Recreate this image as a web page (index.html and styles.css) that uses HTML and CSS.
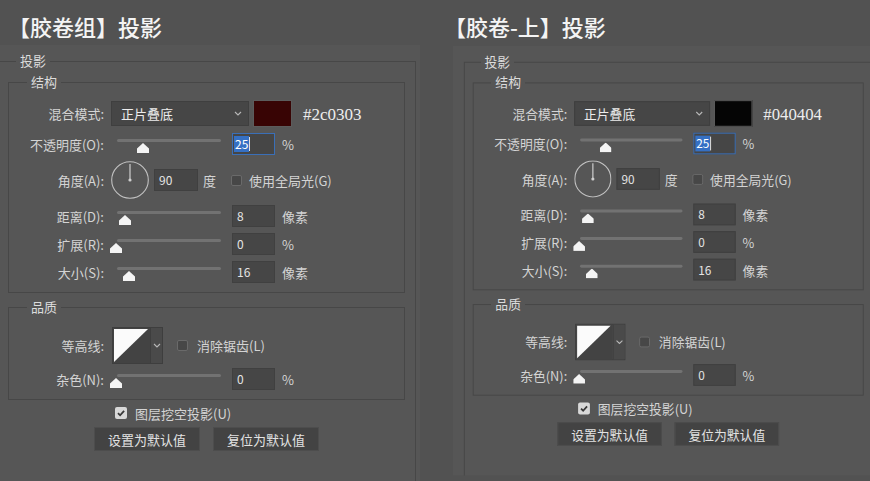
FILE: index.html
```html
<!DOCTYPE html>
<html lang="zh-CN">
<head>
  <meta charset="UTF-8">
  <meta name="viewport" content="width=device-width, initial-scale=1.0">
  <title>投影对比</title>
  <link rel="stylesheet" href="styles.css">
</head>
<body>
  <!-- Left: 胶卷组 -->
  <div class="column column-left">
    <h1 class="title">【胶卷组】投影</h1>
    <div class="sheet">
      <fieldset class="group group-outer">
        <legend>投影</legend>

        <fieldset class="group">
          <legend>结构</legend>
          <div class="rows">
            <div class="row row-blend">
              <span class="label">混合模式:</span>
              <div class="select">
                <span>正片叠底</span>
                <svg width="8" height="5" viewBox="0 0 8 5"><path d="M1 1l3 3 3-3" fill="none" stroke="#b8b8b8" stroke-width="1.1"/></svg>
              </div>
              <div class="swatch swatch-red"></div>
              <span class="hex">#2c0303</span>
            </div>
            <div class="row">
              <span class="label">不透明度(O):</span>
              <div class="slider"><div class="track"></div><div class="thumb" style="--v: 26px"></div></div>
              <div class="field field-focus"><span>25</span><i class="caret"></i></div>
              <span class="unit">%</span>
            </div>
            <div class="row row-angle">
              <span class="label">角度(A):</span>
              <svg class="dial" viewBox="0 0 38 38"><circle cx="19" cy="19" r="18.3" fill="none" stroke="#c2c2c2" stroke-width="1.1"/><line x1="19" y1="19" x2="19" y2="3" stroke="#cfcfcf" stroke-width="1.2"/><circle cx="19" cy="19" r="1.6" fill="#cfcfcf"/></svg>
              <div class="field">90</div>
              <span class="unit">度</span>
              <span class="check"></span>
              <span class="check-text">使用全局光(G)</span>
            </div>
            <div class="row">
              <span class="label">距离(D):</span>
              <div class="slider"><div class="track"></div><div class="thumb" style="--v: 8px"></div></div>
              <div class="field">8</div>
              <span class="unit">像素</span>
            </div>
            <div class="row">
              <span class="label">扩展(R):</span>
              <div class="slider"><div class="track"></div><div class="thumb" style="--v: -1px"></div></div>
              <div class="field">0</div>
              <span class="unit">%</span>
            </div>
            <div class="row">
              <span class="label">大小(S):</span>
              <div class="slider"><div class="track"></div><div class="thumb" style="--v: 12px"></div></div>
              <div class="field">16</div>
              <span class="unit">像素</span>
            </div>
          </div>
        </fieldset>

        <fieldset class="group">
          <legend>品质</legend>
          <div class="rows rows-quality">
            <div class="row row-contour">
              <span class="label">等高线:</span>
              <div class="contour">
                <svg class="curve" viewBox="0 0 37 35"><rect width="37" height="35" fill="#434343"/><polygon points="1,1 35,1 1,34" fill="#fbfbfb"/></svg>
                <div class="drop"><svg width="8" height="5" viewBox="0 0 8 5"><path d="M1 1l3 3 3-3" fill="none" stroke="#b8b8b8" stroke-width="1.1"/></svg></div>
              </div>
              <span class="check"></span>
              <span class="check-text">消除锯齿(L)</span>
            </div>
            <div class="row">
              <span class="label">杂色(N):</span>
              <div class="slider"><div class="track"></div><div class="thumb" style="--v: -1px"></div></div>
              <div class="field">0</div>
              <span class="unit">%</span>
            </div>
          </div>
        </fieldset>

        <div class="knockout">
          <span class="check-on"><svg viewBox="0 0 12 12"><path d="M3 6.2l2.1 2.1 4-4.5" fill="none" stroke="#383838" stroke-width="1.8"/></svg></span>
          <span>图层挖空投影(U)</span>
        </div>
        <div class="buttons">
          <button class="button">设置为默认值</button>
          <button class="button">复位为默认值</button>
        </div>
      </fieldset>
    </div>
  </div>

  <!-- Right: 胶卷-上 -->
  <div class="column column-right">
    <h1 class="title">【胶卷-上】投影</h1>
    <div class="sheet">
      <fieldset class="group group-outer">
        <legend>投影</legend>

        <fieldset class="group">
          <legend>结构</legend>
          <div class="rows">
            <div class="row row-blend">
              <span class="label">混合模式:</span>
              <div class="select">
                <span>正片叠底</span>
                <svg width="8" height="5" viewBox="0 0 8 5"><path d="M1 1l3 3 3-3" fill="none" stroke="#b8b8b8" stroke-width="1.1"/></svg>
              </div>
              <div class="swatch swatch-black"></div>
              <span class="hex">#040404</span>
            </div>
            <div class="row">
              <span class="label">不透明度(O):</span>
              <div class="slider"><div class="track"></div><div class="thumb" style="--v: 26px"></div></div>
              <div class="field field-focus"><span>25</span><i class="caret"></i></div>
              <span class="unit">%</span>
            </div>
            <div class="row row-angle">
              <span class="label">角度(A):</span>
              <svg class="dial" viewBox="0 0 38 38"><circle cx="19" cy="19" r="18.3" fill="none" stroke="#c2c2c2" stroke-width="1.1"/><line x1="19" y1="19" x2="19" y2="3" stroke="#cfcfcf" stroke-width="1.2"/><circle cx="19" cy="19" r="1.6" fill="#cfcfcf"/></svg>
              <div class="field">90</div>
              <span class="unit">度</span>
              <span class="check"></span>
              <span class="check-text">使用全局光(G)</span>
            </div>
            <div class="row">
              <span class="label">距离(D):</span>
              <div class="slider"><div class="track"></div><div class="thumb" style="--v: 8px"></div></div>
              <div class="field">8</div>
              <span class="unit">像素</span>
            </div>
            <div class="row">
              <span class="label">扩展(R):</span>
              <div class="slider"><div class="track"></div><div class="thumb" style="--v: -1px"></div></div>
              <div class="field">0</div>
              <span class="unit">%</span>
            </div>
            <div class="row">
              <span class="label">大小(S):</span>
              <div class="slider"><div class="track"></div><div class="thumb" style="--v: 12px"></div></div>
              <div class="field">16</div>
              <span class="unit">像素</span>
            </div>
          </div>
        </fieldset>

        <fieldset class="group">
          <legend>品质</legend>
          <div class="rows rows-quality">
            <div class="row row-contour">
              <span class="label">等高线:</span>
              <div class="contour">
                <svg class="curve" viewBox="0 0 37 35"><rect width="37" height="35" fill="#434343"/><polygon points="1,1 35,1 1,34" fill="#fbfbfb"/></svg>
                <div class="drop"><svg width="8" height="5" viewBox="0 0 8 5"><path d="M1 1l3 3 3-3" fill="none" stroke="#b8b8b8" stroke-width="1.1"/></svg></div>
              </div>
              <span class="check"></span>
              <span class="check-text">消除锯齿(L)</span>
            </div>
            <div class="row">
              <span class="label">杂色(N):</span>
              <div class="slider"><div class="track"></div><div class="thumb" style="--v: -1px"></div></div>
              <div class="field">0</div>
              <span class="unit">%</span>
            </div>
          </div>
        </fieldset>

        <div class="knockout">
          <span class="check-on"><svg viewBox="0 0 12 12"><path d="M3 6.2l2.1 2.1 4-4.5" fill="none" stroke="#383838" stroke-width="1.8"/></svg></span>
          <span>图层挖空投影(U)</span>
        </div>
        <div class="buttons">
          <button class="button">设置为默认值</button>
          <button class="button">复位为默认值</button>
        </div>
      </fieldset>
    </div>
  </div>
</body>
</html>
```

FILE: styles.css
```css
* {
  box-sizing: border-box;
}
body {
  margin: 0;
  width: 870px;
  height: 481px;
  overflow: hidden;
  display: flex;
  background: #525252;
  font-family: "Noto Sans CJK SC", "Noto Sans", sans-serif;
  font-size: 13px;
  color: #d4d4d4;
}
.column {
  width: 435px;
  height: 481px;
  flex-shrink: 0;
  overflow: hidden;
}
.title {
  margin: 0;
  height: 42px;
  padding: 10px 0 0 8px;
  font-size: 22px;
  line-height: 32px;
  font-weight: 500;
  color: #f4f4f4;
  white-space: nowrap;
}
.column-right .title {
  padding-left: 9px;
}
.sheet {
  width: 432px;
  height: 436px;
  margin: 3px 0 0 -12px;
  padding: 0 4px 0 11px;
  background: #565656;
  overflow: hidden;
}
.column-right .sheet {
  margin: 4px 0 0 18px;
  transform: scale(0.985);
  transform-origin: 0 0;
}

/* Group boxes */
.group {
  margin: 0;
  min-width: 0;
  padding: 9px 0;
  border: 1px solid #474747;
}
.group legend {
  margin-left: 18px;
  padding: 0 4px;
  line-height: 18px;
  color: #dcdcdc;
}
.group-outer {
  height: 440px;
  margin-top: 7px;
  padding: 3px 10px 0 8px;
}
.group-outer > legend {
  margin-left: 8px;
}
.group + .group {
  margin-top: 5px;
  padding-top: 11px;
}
.rows {
  display: flex;
  flex-direction: column;
  gap: 6px;
}
.rows-quality {
  gap: 4px;
}
.row {
  display: flex;
  align-items: center;
  height: 22px;
  white-space: nowrap;
}
.row-blend {
  height: 27px;
}
.row-angle {
  height: 38px;
}
.row-contour {
  height: 37px;
}
.label {
  width: 95px;
  flex-shrink: 0;
  text-align: right;
}

/* Blend mode */
.select {
  display: flex;
  align-items: center;
  justify-content: space-between;
  width: 138px;
  height: 25px;
  margin-left: 7px;
  padding: 0 6px 0 9px;
  background: #464646;
  border: 1px solid #3f3f3f;
  color: #ededed;
}
.swatch {
  width: 39px;
  height: 27px;
  margin-left: 4px;
  border: 1px solid #5c5c5c;
}
.swatch-red {
  background: #380404;
}
.swatch-black {
  background: #050505;
}
.hex {
  margin: 2px 0 0 11px;
  font-family: "Liberation Serif", serif;
  font-size: 17px;
  color: #ededed;
}

/* Sliders */
.slider {
  position: relative;
  width: 104px;
  height: 22px;
  margin-left: 13px;
}
.track {
  height: 3px;
  margin-top: 6px;
  background: #727272;
  border-radius: 2px;
}
.thumb {
  position: absolute;
  top: 10px;
  left: calc(var(--v) - 6px);
  width: 12px;
  height: 10px;
  background: #f4f4f4;
  clip-path: polygon(50% 0, 100% 55%, 100% 100%, 0 100%, 0 55%);
}
.field {
  width: 43px;
  height: 22px;
  margin-left: 11px;
  padding-left: 4px;
  background: #464646;
  border: 1px solid #404040;
  color: #e4e4e4;
  font-size: 12px;
  line-height: 20px;
}
.field-focus {
  display: flex;
  align-items: center;
  border-color: #3a6fb8;
  padding-left: 1px;
}
.field-focus span {
  padding: 0 1px;
  background: #3570c4;
  color: #fff;
  line-height: 16px;
}
.caret {
  width: 1px;
  height: 14px;
  background: #e0e0e0;
}
.unit {
  margin-left: 7px;
}

/* Angle */
.dial {
  width: 38px;
  height: 38px;
  margin-left: 7px;
  flex-shrink: 0;
}
.row-angle .field {
  width: 44px;
  margin-left: 5px;
}
.row-angle .unit {
  margin-left: 5px;
}
.check {
  width: 11px;
  height: 11px;
  flex-shrink: 0;
  background: #474747;
  border: 1px solid #6a6a6a;
  border-radius: 2px;
}
.row-angle .check {
  margin-left: 15px;
}
.check-text {
  margin-left: 7px;
}

/* Contour */
.contour {
  display: flex;
  width: 51px;
  height: 37px;
  margin-left: 8px;
  border: 1px solid #3e3e3e;
}
.curve {
  width: 37px;
  height: 35px;
}
.drop {
  flex: 1;
  display: flex;
  align-items: center;
  justify-content: center;
  background: #4a4a4a;
  border-left: 1px solid #3e3e3e;
}
.row-contour .check {
  margin-left: 14px;
}
.row-contour .check-text {
  margin-left: 9px;
}

/* Bottom */
.knockout {
  display: flex;
  align-items: center;
  height: 16px;
  margin: 5px 0 0 107px;
  white-space: nowrap;
}
.check-on {
  display: flex;
  width: 12px;
  height: 12px;
  background: #d8d8d8;
  border-radius: 2px;
}
.knockout span + span {
  margin-left: 8px;
}
.buttons {
  display: flex;
  gap: 13px;
  margin: 6px 0 0 86px;
}
.button {
  width: 106px;
  height: 24px;
  padding: 0;
  background: #434343;
  border: 1px solid #4d4d4d;
  color: #e2e2e2;
  font: inherit;
}
```
